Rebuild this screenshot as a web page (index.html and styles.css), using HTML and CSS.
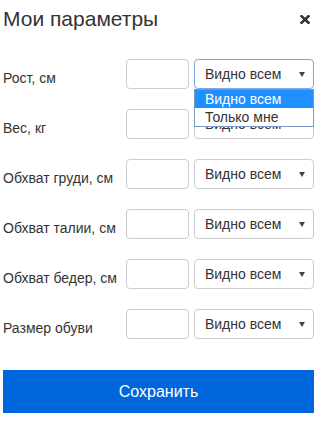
FILE: index.html
```html
<!DOCTYPE html>
<html lang="ru">
<head>
<meta charset="UTF-8">
<meta name="viewport" content="width=device-width, initial-scale=1.0">
<title>Мои параметры</title>
<link rel="stylesheet" href="styles.css">
</head>
<body>
<div class="окно">
    <div class="шапка">
        <h1>Мои параметры</h1>
        <svg class="закрыть" width="10" height="9" viewBox="0 0 10 9">
            <path d="M1.5 1.2 L8.5 7.8 M8.5 1.2 L1.5 7.8" stroke="#333" stroke-width="2.6" stroke-linecap="square"/>
        </svg>
    </div>
    <div class="ряды">
        <div class="ряд">
            <label>Рост, см</label>
            <input type="text" class="поле">
            <div class="выбор открыт">
                <span>Видно всем</span><i class="стрелка"></i>
                <ul class="список">
                    <li class="активный">Видно всем</li>
                    <li>Только мне</li>
                </ul>
            </div>
        </div>
        <div class="ряд">
            <label>Вес, кг</label>
            <input type="text" class="поле">
            <div class="выбор"><span>Видно всем</span><i class="стрелка"></i></div>
        </div>
        <div class="ряд">
            <label>Обхват груди, см</label>
            <input type="text" class="поле">
            <div class="выбор"><span>Видно всем</span><i class="стрелка"></i></div>
        </div>
        <div class="ряд">
            <label>Обхват талии, см</label>
            <input type="text" class="поле">
            <div class="выбор"><span>Видно всем</span><i class="стрелка"></i></div>
        </div>
        <div class="ряд">
            <label>Обхват бедер, см</label>
            <input type="text" class="поле">
            <div class="выбор"><span>Видно всем</span><i class="стрелка"></i></div>
        </div>
        <div class="ряд">
            <label>Размер обуви</label>
            <input type="text" class="поле">
            <div class="выбор"><span>Видно всем</span><i class="стрелка"></i></div>
        </div>
    </div>
    <button class="сохранить">Сохранить</button>
</div>
</body>
</html>
```

FILE: styles.css
```css
*{margin:0;padding:0;box-sizing:border-box;}
body
{
    font-family: "Liberation Sans", Arial, sans-serif;
    color: #333;
    background: #fff;
}
.окно
{
    padding: 0 4px 0 3px;
}
.шапка
{
    display: flex;
    justify-content: space-between;
    align-items: center;
    padding-top: 7px;
}
.шапка h1
{
    font-size: 21px;
    font-weight: normal;
    line-height: 24px;
}
.закрыть
{
    margin-right: 4px;
    margin-top: 1px;
}
.ряды
{
    display: flex;
    flex-direction: column;
    gap: 20px;
    margin-top: 28px;
}
.ряд
{
    display: flex;
    align-items: center;
    height: 30px;
}
.ряд label
{
    width: 124px;
    font-size: 14px;
    padding-top: 8px;
}
.поле
{
    width: 63px;
    height: 30px;
    border: 1px solid #ccc;
    border-radius: 4px;
    margin-right: 5px;
}
.выбор
{
    position: relative;
    width: 121px;
    height: 30px;
    border: 1px solid #ccc;
    border-radius: 4px;
    display: flex;
    align-items: center;
    padding-left: 10px;
    font-size: 14px;
    color: #333;
}
.выбор.открыт
{
    border-color: #7ea8ea;
}
.стрелка
{
    position: absolute;
    right: 8px;
    top: 12px;
    border-left: 3px solid transparent;
    border-right: 3px solid transparent;
    border-top: 5px solid #444;
}
.список
{
    position: absolute;
    left: -1px;
    top: 29px;
    width: 120px;
    list-style: none;
    background: #fff;
    border: 1px solid #7b97c4;
    z-index: 2;
}
.список li
{
    height: 18px;
    line-height: 18px;
    padding-left: 10px;
}
.список li.активный
{
    background: #1e90ff;
    color: #fff;
}
.сохранить
{
    display: block;
    width: 311px;
    height: 43px;
    margin-top: 31px;
    border: none;
    background: #0066dd;
    color: #fff;
    font-family: "Liberation Sans", Arial, sans-serif;
    font-size: 16px;
}
```
